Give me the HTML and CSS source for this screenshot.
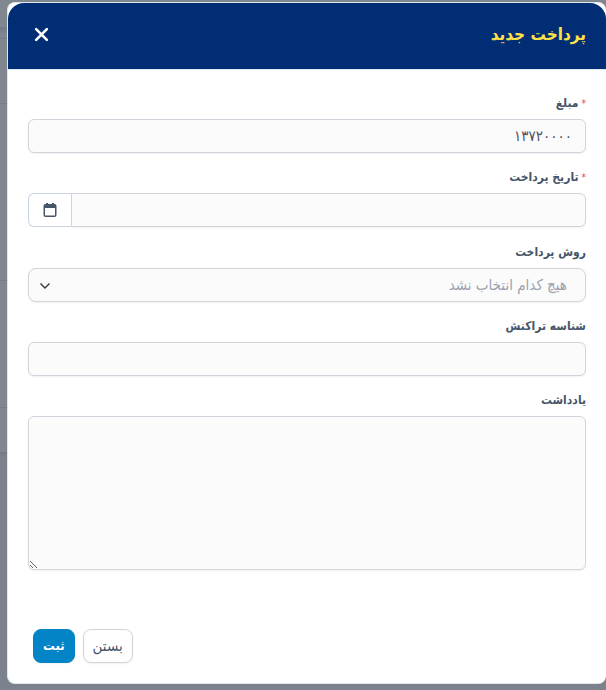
FILE: index.html
```html
<!DOCTYPE html>
<html lang="fa" dir="rtl">
<head>
<meta charset="utf-8">
<meta name="viewport" content="width=device-width, initial-scale=1">
<title>پرداخت جدید</title>
<link rel="stylesheet" href="styles.css">
</head>
<body>
<main class="modal" role="dialog" aria-labelledby="title">
  <header class="modal-header">
    <h1 class="modal-title" id="title">پرداخت جدید</h1>
    <button class="close" type="button" aria-label="بستن">
      <svg width="15" height="15" viewBox="0 0 16 16" fill="none" stroke="currentColor" stroke-width="2.800" stroke-linecap="round"><path d="M2.300 2.300l11.400 11.400M13.700 2.300l-11.400 11.400"/></svg>
    </button>
  </header>
  <form class="form">
    <div class="fields">
      <div class="field">
        <label class="label" for="amount"><span class="required">*</span>مبلغ</label>
        <input class="control" id="amount" type="text" value="۱۳۷۲۰۰۰۰">
      </div>
      <div class="field">
        <label class="label" for="date"><span class="required">*</span>تاریخ پرداخت</label>
        <div class="input-group">
          <input class="control" id="date" type="text">
          <button class="addon" type="button" aria-label="تقویم">
            <svg width="14" height="14" viewBox="0 0 14 14"><path fill="#475569" fill-rule="evenodd" d="M3 0h2v1h4V0h2v1h.5Q13.500 1 13.500 3v9q0 2-2 2h-9Q.5 14 .5 12V3Q.5 1 2.500 1H3zM2 5v7q0 .6.6.6h8.800q.6 0 .6-.6V5z"/></svg>
          </button>
        </div>
      </div>
      <div class="field">
        <label class="label" for="method">روش پرداخت</label>
        <div class="select-wrap">
          <select class="control select" id="method"><option>هیچ کدام انتخاب نشد</option></select>
          <svg class="chevron" width="12" height="8" viewBox="0 0 12 8" fill="none" stroke="#343a40" stroke-width="1.400"><path d="M1.500 1.500L6 6l4.500-4.500"/></svg>
        </div>
      </div>
      <div class="field">
        <label class="label" for="transaction">شناسه تراکنش</label>
        <input class="control" id="transaction" type="text">
      </div>
      <div class="field">
        <label class="label" for="note">یادداشت</label>
        <textarea class="control note" id="note"></textarea>
      </div>
    </div>
    <footer class="actions">
      <button class="btn" type="button">بستن</button>
      <button class="btn btn-primary" type="submit">ثبت</button>
    </footer>
  </form>
</main>
</body>
</html>
```

FILE: styles.css
```css
* { box-sizing: border-box; }

body {
  margin: 0;
  min-height: 100vh;
  padding: 2px 0 6px 7px;
  font-family: "DejaVu Sans Condensed", "DejaVu Sans", sans-serif;
  font-size: 15px;
  line-height: 20px;
  color: #475569;
  background:
    linear-gradient(transparent 27px, #747a84 27px, #7e858f 33px, transparent 33px),
    linear-gradient(transparent 38px, #757c85 38px, #757c85 39px, transparent 39px),
    linear-gradient(transparent 103px, #757c85 103px, #757c85 104px, transparent 104px),
    linear-gradient(transparent 280px, #757c85 280px, #757c85 281px, transparent 281px),
    linear-gradient(transparent 407px, #757c85 407px, #757c85 408px, transparent 408px),
    linear-gradient(#80878f 452px, #747a84 452px, #7c828d 458px);
}

button, input, select, textarea { font: inherit; color: inherit; }

.modal {
  background: #fff;
  border: 1px solid #e2e6ea;
  border-right: 0;
  border-radius: 8px;
}

.modal-header {
  display: flex;
  align-items: center;
  justify-content: space-between;
  height: 67px;
  padding: 0 20px 4px 24px;
  background: #002d74;
  border-bottom: 1px solid #e2e8f0;
  border-radius: 16px 16px 0 0;
}

.modal-title {
  margin: 0;
  color: #fde047;
  font-size: 17px;
  line-height: 24px;
}

.close {
  display: flex;
  padding: 2px;
  border: 0;
  background: none;
  color: #fff;
}

.form { padding: 23px 20px 20px; }

.fields {
  display: flex;
  flex-direction: column;
  gap: 14px;
}

.field {
  display: flex;
  flex-direction: column;
  gap: 6px;
}

.label {
  font-size: 12px;
  font-weight: 700;
}

.required {
  margin-left: 3px;
  color: #ef4444;
  font-size: 10px;
  font-weight: 400;
  line-height: 10px;
}

.control {
  width: 100%;
  height: 34px;
  padding: 0 13px;
  border: 1px solid #d1d5db;
  border-radius: 6px;
  background: #fbfbfb;
  color: #52525b;
  box-shadow: 0 1px 2px rgba(0, 0, 0, .06);
}

.input-group {
  display: flex;
  padding-bottom: 1px;
}

.input-group .control {
  flex: 1;
  border-radius: 0 6px 6px 0;
}

.addon {
  display: flex;
  align-items: center;
  justify-content: center;
  width: 43px;
  border: 1px solid #cbd5e1;
  border-right: 0;
  border-radius: 6px 0 0 6px;
  background: #fff;
}

.select-wrap { position: relative; }

.select {
  display: block;
  padding: 0 18px;
  appearance: none;
  border-radius: 8px;
  color: #9ca3af;
}

.chevron {
  position: absolute;
  left: 11px;
  top: 14px;
  pointer-events: none;
}

.note {
  display: block;
  height: 154px;
  padding: 6px 13px;
  resize: vertical;
}

.actions {
  display: flex;
  justify-content: flex-end;
  gap: 8px;
  margin-top: 59px;
  padding-left: 5px;
}

.btn {
  height: 34px;
  padding: 0 9px;
  border: 1px solid #d1d5db;
  border-radius: 8px;
  background: #fff;
  box-shadow: 0 1px 2px rgba(0, 0, 0, .06);
}

.btn-primary {
  border-color: #0284c7;
  background: #0284c7;
  color: #fff;
  font-size: 13px;
  font-weight: 700;
}
```
